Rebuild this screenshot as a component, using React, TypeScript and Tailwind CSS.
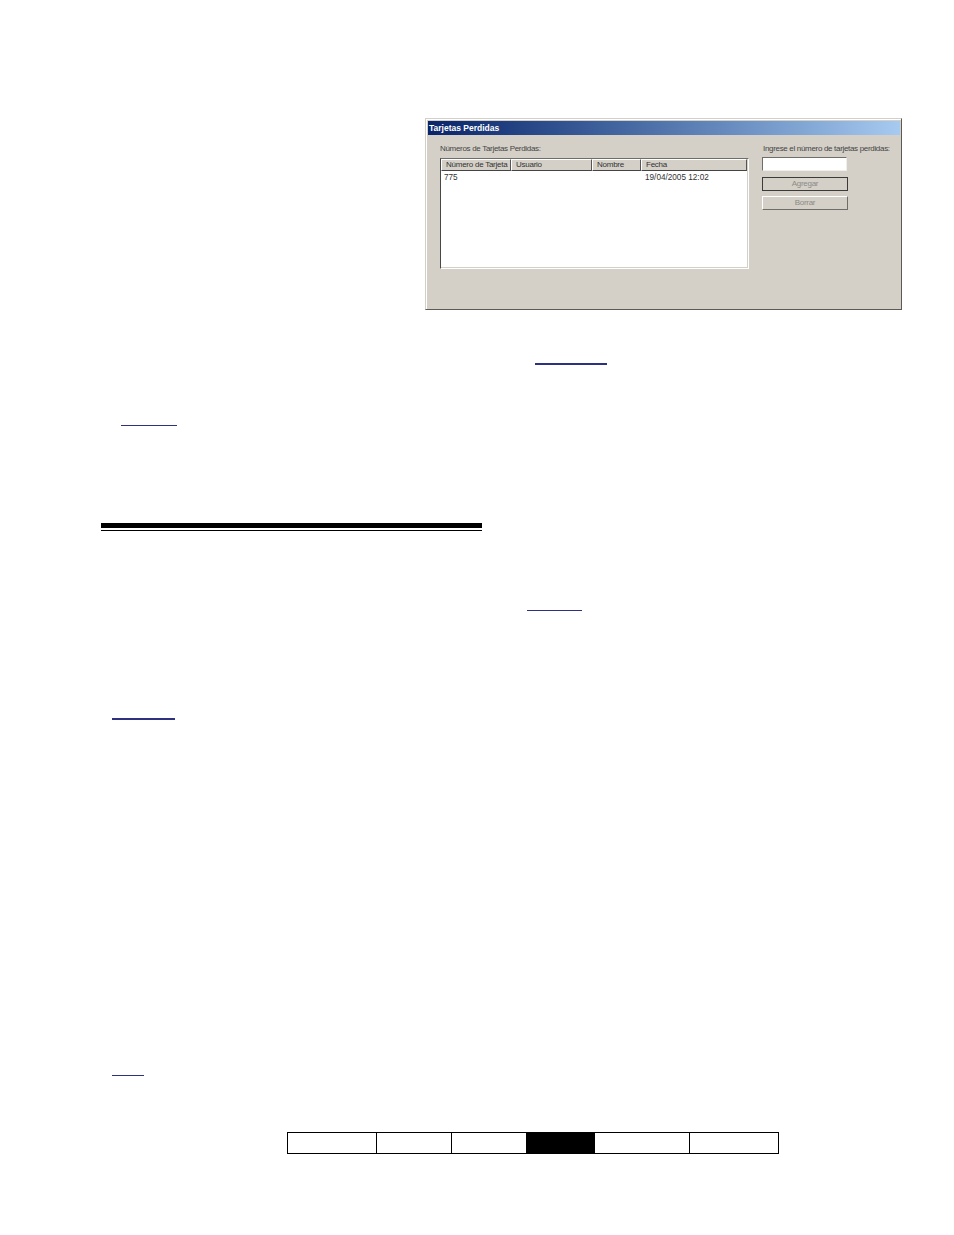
const font = "font-['Liberation_Sans','Arial',sans-serif]";

function Rule({ left, width, top, h = "h-[2px]" }: { left: string; width: string; top: string; h?: string }) {
  return <div className={`${left} ${width} ${top} ${h} bg-[#2e3080]`} />;
}

function HeaderCell({ w, label, last }: { w: string; label: string; last?: boolean }) {
  return (
    <div className={`${w} ${last ? "flex-1" : ""} h-full pl-[4px] flex items-center bg-[#d4d0c8] border-t border-l border-t-white border-l-white border-r border-b border-r-[#555] border-b-[#444] text-[8px] tracking-[-0.25px] leading-none text-[#333] whitespace-nowrap antialiased`}>
      {label}
    </div>
  );
}

function LostCardsWindow() {
  return (
    <div className={`ml-[425px] w-[477px] h-[192px] bg-[#d4d0c8] border border-[#d4d0c8] border-r-[#5c5a55] border-b-[#5c5a55] antialiased ${font}`}>
      <div className="h-full border-t border-l border-white pt-[1px] pl-[1px] pr-[1px] flex flex-col">
        <div className="h-[14px] bg-gradient-to-r from-[#0a246a] to-[#a6caf0] pl-[1px] flex items-center text-[8.5px] font-bold text-white leading-none">
          Tarjetas Perdidas
        </div>
        <div className="flex pl-[12px] pt-[10px]">
          <div className="w-[309px]">
            <div className="text-[8px] tracking-[-0.31px] leading-[7px] h-[13px] text-[#444]">Números de Tarjetas Perdidas:</div>
            <div className="w-[309px] h-[111px] bg-white border border-t-[#6f6d68] border-l-[#4a4844] border-r-white border-b-white">
              <div className="h-full border-r border-b border-r-[#d4d0c8] border-b-[#d4d0c8] flex flex-col">
                <div className="h-[12px] flex">
                  <HeaderCell w="w-[70px]" label="Número de Tarjeta" />
                  <HeaderCell w="w-[81px]" label="Usuario" />
                  <HeaderCell w="w-[49px]" label="Nombre" />
                  <HeaderCell w="" label="Fecha" last />
                </div>
                <div className="flex text-[8.2px] leading-none text-[#333] pt-[3px] pl-[3px]">
                  <span className="w-[201px]">775</span>
                  <span>19/04/2005 12:02</span>
                </div>
              </div>
            </div>
          </div>
          <div className="ml-[14px] w-[130px] flex flex-col items-start">
            <div className="text-[8px] tracking-[-0.32px] leading-[7px] h-[12px] text-[#444] whitespace-nowrap">Ingrese el número de tarjetas perdidas:</div>
            <div className="-ml-[1px] w-[85px] h-[14px] bg-white border border-t-[#6f6d68] border-l-[#6f6d68] border-r-[#eeeeea] border-b-[#eeeeea]" />
            <button className="-ml-[1px] mt-[6px] w-[86px] h-[14px] border border-[#3a3a38] bg-[#d4d0c8] text-[8px] tracking-[-0.3px] leading-none text-[#8c8a85] flex items-center justify-center">
              Agregar
            </button>
            <button className="-ml-[1px] mt-[5px] w-[86px] h-[14px] border border-t-white border-l-white border-r-[#6f6d68] border-b-[#6f6d68] bg-[#d4d0c8] text-[8px] tracking-[-0.3px] leading-none text-[#8c8a85] flex items-center justify-center">
              Borrar
            </button>
          </div>
        </div>
      </div>
    </div>
  );
}

export default function App() {
  const cells = ["w-[89px]", "w-[75px]", "w-[75px]", "w-[68px]", "w-[95px]", "w-[88px]"];
  return (
    <div className="w-[954px] h-[1235px] bg-white pt-[118px] flex flex-col items-start">
      <LostCardsWindow />
      <Rule left="ml-[535px]" width="w-[72px]" top="mt-[53px]" />
      <Rule left="ml-[121px]" width="w-[56px]" top="mt-[60px]" h="h-[1px]" />
      <div className="ml-[101px] w-[381px] mt-[97px]">
        <div className="h-[5px] bg-black" />
        <div className="h-[1px] bg-black mt-[2px]" />
      </div>
      <Rule left="ml-[527px]" width="w-[55px]" top="mt-[79px]" h="h-[1px]" />
      <Rule left="ml-[112px]" width="w-[63px]" top="mt-[107px]" />
      <Rule left="ml-[112px]" width="w-[32px]" top="mt-[355px]" h="h-[1px]" />
      <div className="ml-[287px] mt-[56px] flex h-[22px] border border-black">
        {cells.map((w, i) => (
          <div key={i} className={`${w} ${i < 5 ? "border-r border-black" : ""} ${i === 3 ? "bg-black" : "bg-white"}`} />
        ))}
      </div>
    </div>
  );
}
